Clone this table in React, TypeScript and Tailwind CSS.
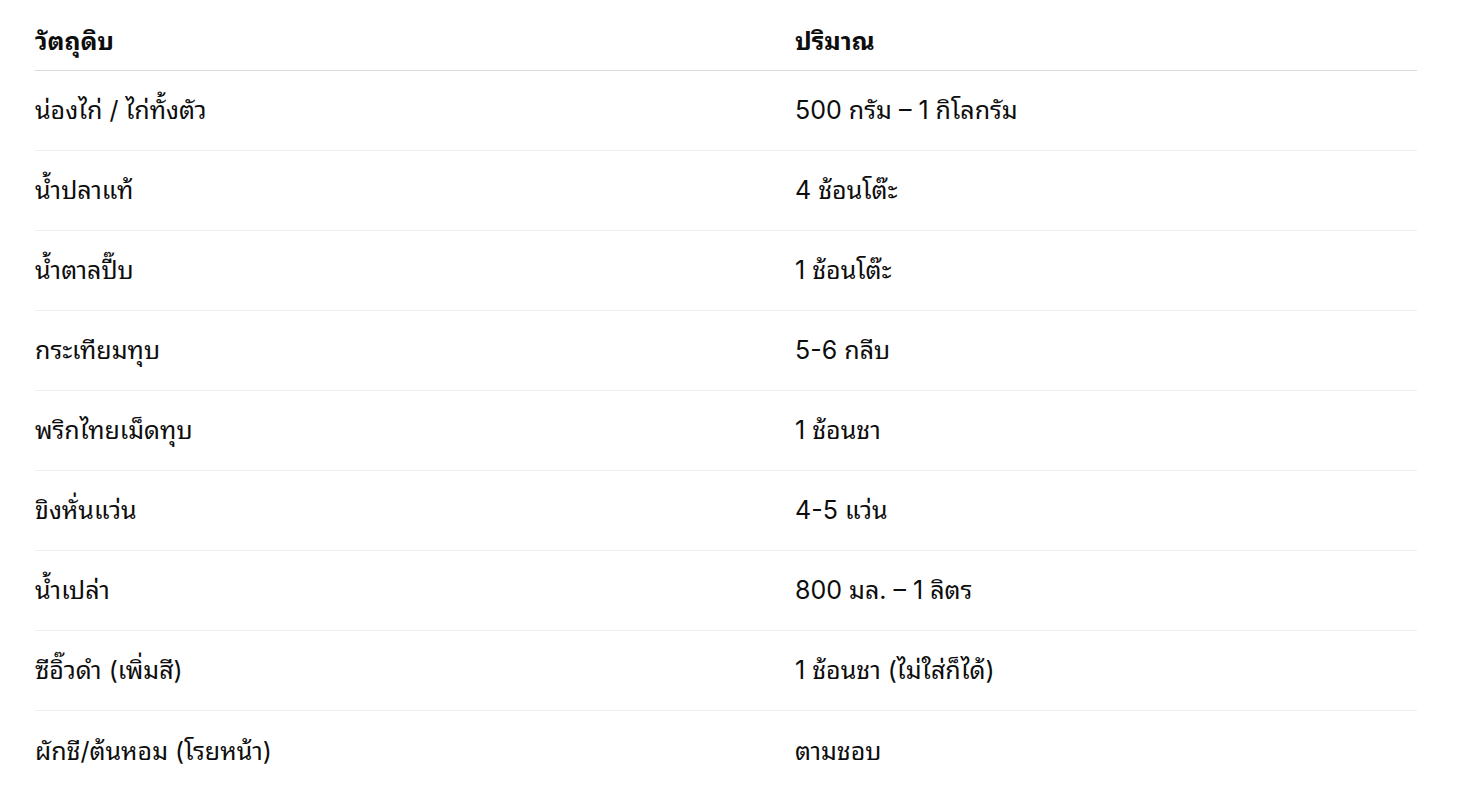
const ROWS = [
  ['น่องไก่ / ไก่ทั้งตัว', '500 กรัม – 1 กิโลกรัม'],
  ['น้ำปลาแท้', '4 ช้อนโต๊ะ'],
  ['น้ำตาลปี๊บ', '1 ช้อนโต๊ะ'],
  ['กระเทียมทุบ', '5-6 กลีบ'],
  ['พริกไทยเม็ดทุบ', '1 ช้อนชา'],
  ['ขิงหั่นแว่น', '4-5 แว่น'],
  ['น้ำเปล่า', '800 มล. – 1 ลิตร'],
  ['ซีอิ๊วดำ (เพิ่มสี)', '1 ช้อนชา (ไม่ใส่ก็ได้)'],
  ['ผักชี/ต้นหอม (โรยหน้า)', 'ตามชอบ'],
];

export default function App() {
  return (
    <div className="min-h-screen bg-white pt-[12px] pl-[35px] pr-[67px] font-['Inter','Noto_Sans_Thai_Looped','Noto_Sans_Thai','Noto_Sans',sans-serif] text-[#0d0d0d]">
      <table className="w-full border-collapse text-left">
        <thead>
          <tr className="border-b border-[#d9d9d9]">
            <th className="h-[58px] w-[760px] p-0 pt-[1px] align-middle text-[25px] font-bold">วัตถุดิบ</th>
            <th className="h-[58px] p-0 pt-[1px] align-middle text-[25px] font-bold">ปริมาณ</th>
          </tr>
        </thead>
        <tbody>
          {ROWS.map(([name, qty], i) => (
            <tr key={name} className={i < ROWS.length - 1 ? 'border-b border-[#efefef]' : ''}>
              <td className="h-[80px] p-0 pt-[2px] align-middle text-[25px]">{name}</td>
              <td className="h-[80px] p-0 pt-[2px] align-middle text-[25px]">{qty}</td>
            </tr>
          ))}
        </tbody>
      </table>
    </div>
  );
}
